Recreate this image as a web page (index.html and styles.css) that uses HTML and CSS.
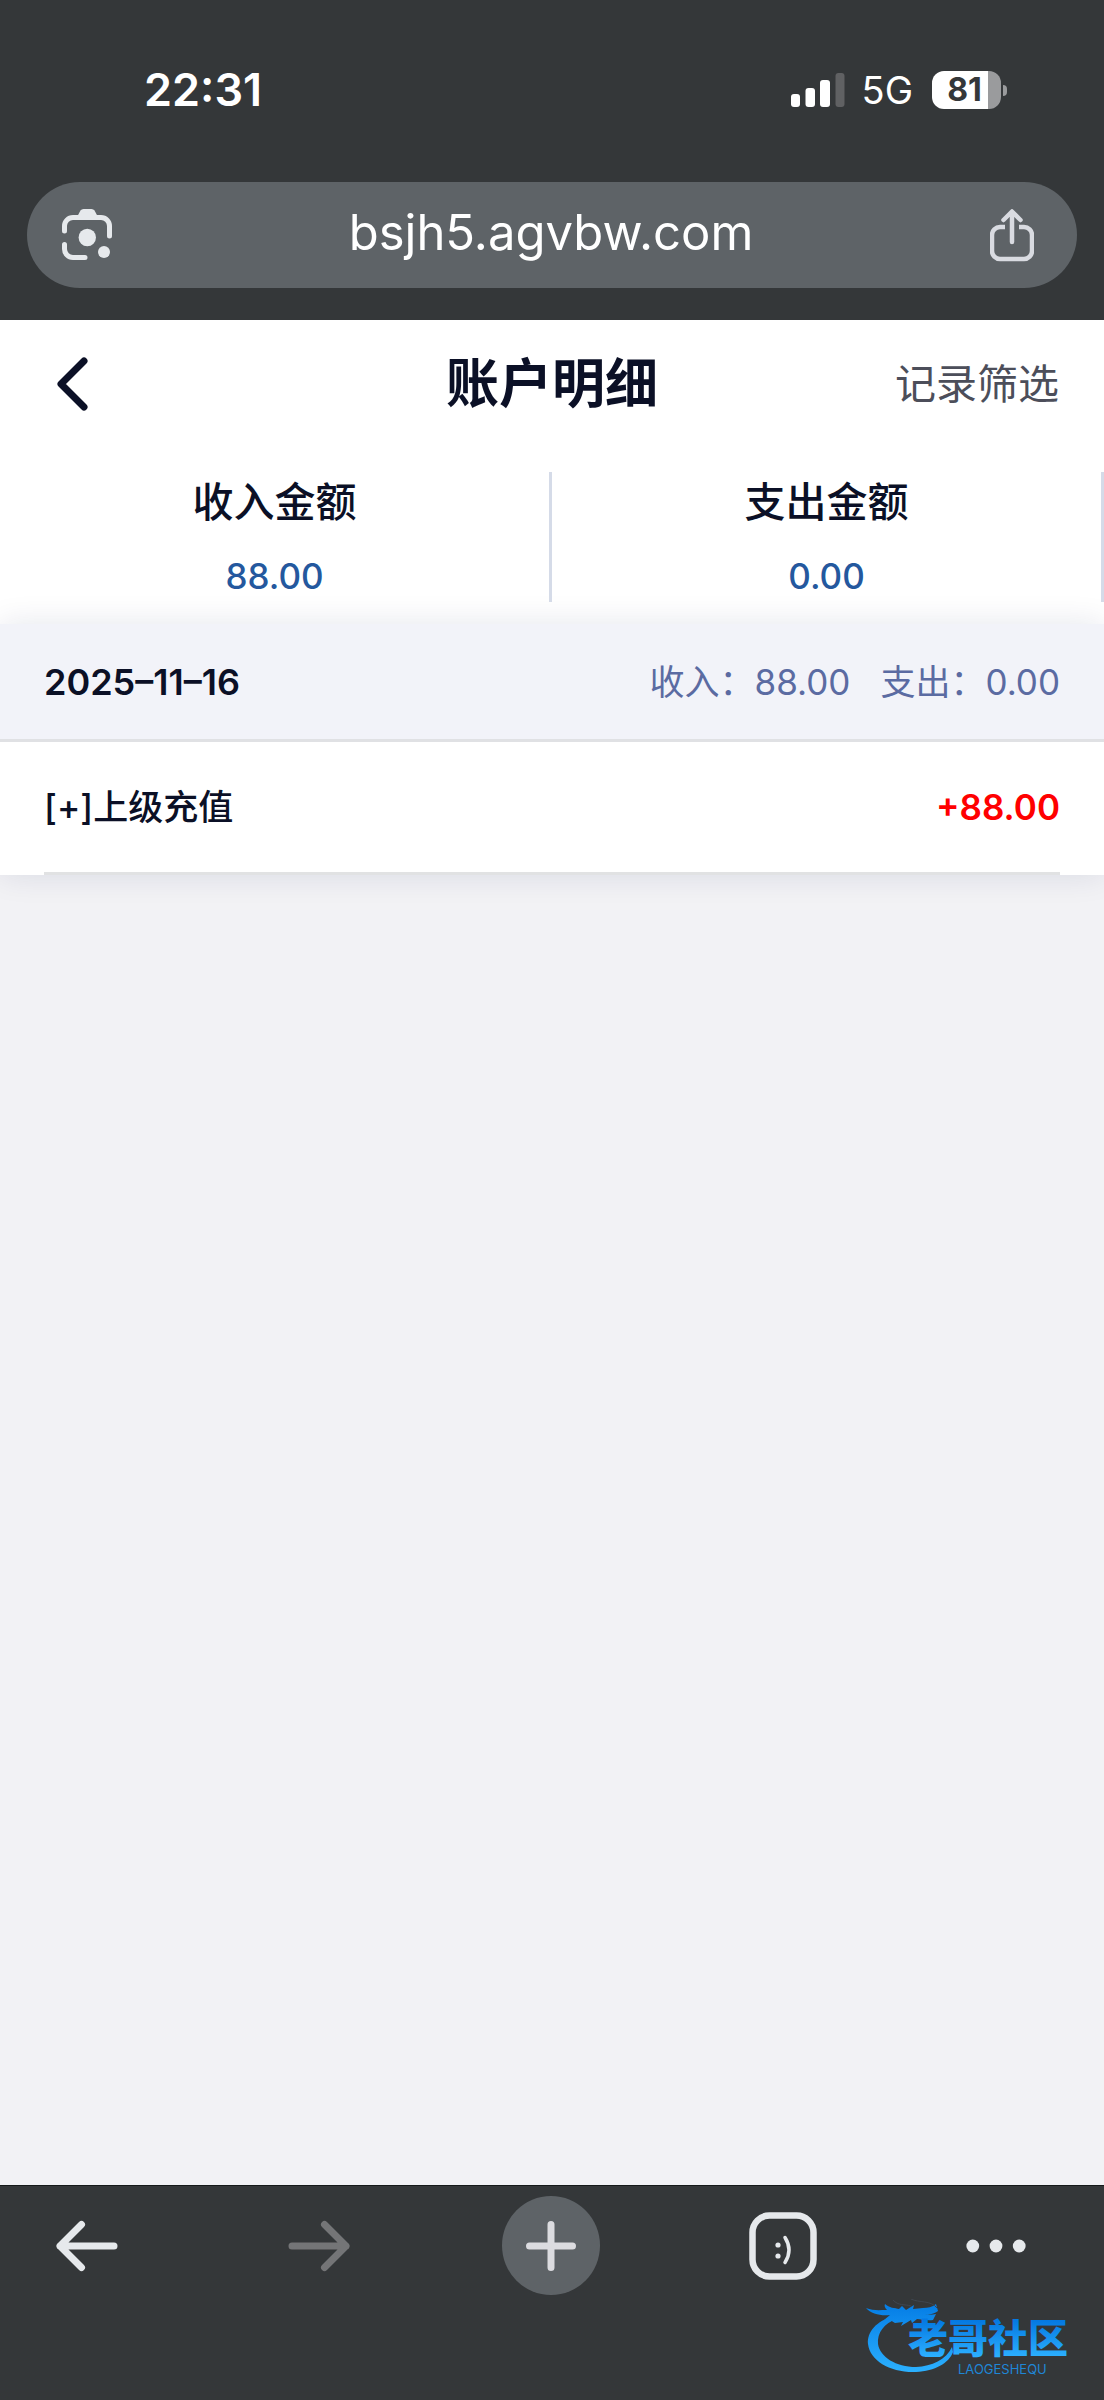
FILE: index.html
```html
<!DOCTYPE html>
<html lang="zh-CN">
<head>
<meta charset="utf-8">
<meta name="viewport" content="width=device-width, initial-scale=1">
<title>账户明细</title>
<link rel="stylesheet" href="styles.css">
</head>
<body>
<header class="browser-top">
  <div class="status">
    <time class="clock">22:31</time>
    <div class="status-right">
      <svg class="signal" width="54" height="34" viewBox="0 0 54 34" fill="#fff" aria-hidden="true">
        <rect x="0" y="21" width="9" height="13" rx="3"/>
        <rect x="14.5" y="15" width="9.5" height="19" rx="3"/>
        <rect x="29" y="7" width="10" height="27" rx="3"/>
        <rect x="44.500" y="0" width="9" height="34" rx="3" fill="#606163"/>
      </svg>
      <span class="network">5G</span>
      <div class="battery"><span class="battery-level">81</span></div>
    </div>
  </div>
  <form class="address">
    <button class="icon-button" type="button" aria-label="智能镜头">
      <svg width="50" height="52" viewBox="0 0 50 52" fill="none" stroke="#e6e9ec" stroke-width="5" stroke-linecap="round" aria-hidden="true">
        <path d="M2.500 22V17a8.500 8.500 0 0 1 8.500-8.500H39a8.500 8.500 0 0 1 8.500 8.500V27"/>
        <path d="M2.500 35.500V40a8.500 8.500 0 0 0 8.500 8.500H23"/>
        <path d="M15 8 18.500 1.500Q19.500 0 21.500 0h8Q31.500 0 32.500 1.500L36 8Z" fill="#e6e9ec" stroke="none"/>
        <circle cx="25.300" cy="28.500" r="8.700" fill="#e6e9ec" stroke="none"/>
        <circle cx="42" cy="43" r="6" fill="#e6e9ec" stroke="none"/>
      </svg>
    </button>
    <input class="url" type="text" value="bsjh5.agvbw.com" aria-label="网址">
    <button class="icon-button" type="button" aria-label="分享">
      <svg width="44" height="54" viewBox="0 0 44 54" fill="none" stroke="#d9dbe1" stroke-width="4.500" stroke-linecap="round" stroke-linejoin="round" aria-hidden="true">
        <path d="M15 19h-5a8 8 0 0 0-8 8v16a8 8 0 0 0 8 8h24a8 8 0 0 0 8-8V27a8 8 0 0 0-8-8h-5" stroke-linecap="butt"/>
        <path d="M22 34V4M13.500 12 22 3.500 30.500 12"/>
      </svg>
    </button>
  </form>
</header>

<main class="page">
  <div class="title-bar">
    <button class="back" type="button" aria-label="返回">
      <svg width="31" height="54" viewBox="0 0 31 54" fill="none" stroke="#0b1026" stroke-width="7" stroke-linecap="round" stroke-linejoin="round" aria-hidden="true"><path d="M27 4 4 27 27 50"/></svg>
    </button>
    <h1 class="title">账户明细</h1>
    <a class="filter" href="#filter">记录筛选</a>
  </div>

  <dl class="totals">
    <div class="total"><dt>收入金额</dt><dd>88.00</dd></div>
    <div class="total"><dt>支出金额</dt><dd>0.00</dd></div>
  </dl>

  <section class="day">
    <div class="day-head">
      <h2 class="date">2025–11–16</h2>
      <p class="day-sums"><span>收入：88.00</span><span>支出：0.00</span></p>
    </div>
    <ul class="records">
      <li class="record"><span>[+]上级充值</span><span class="amount">+88.00</span></li>
    </ul>
  </section>
</main>

<nav class="browser-nav">
  <button class="nav-button" type="button" aria-label="后退">
    <svg width="62" height="52" viewBox="0 0 62 52" fill="none" stroke="#e6e9ec" stroke-width="7" stroke-linecap="round" stroke-linejoin="round" aria-hidden="true"><path d="M58 26H4M25.500 4.500 4 26l21.500 21.500"/></svg>
  </button>
  <button class="nav-button" type="button" aria-label="前进">
    <svg width="62" height="52" viewBox="0 0 62 52" fill="none" stroke="#747577" stroke-width="7" stroke-linecap="round" stroke-linejoin="round" aria-hidden="true"><path d="M4 26h54M36.500 4.500 58 26 36.500 47.500"/></svg>
  </button>
  <button class="nav-button nav-new" type="button" aria-label="新标签页">
    <svg width="50" height="50" viewBox="0 0 50 50" fill="none" stroke="#dcdce0" stroke-width="7" stroke-linecap="round" aria-hidden="true"><path d="M25 3.500v43M3.500 25h43"/></svg>
  </button>
  <button class="nav-button" type="button" aria-label="标签页">
    <svg width="68" height="68" viewBox="0 0 68 68" fill="none" stroke="#e6e9ec" aria-hidden="true">
      <rect x="3.500" y="3.500" width="61" height="61" rx="17" stroke-width="6.500"/>
      <circle cx="29" cy="33" r="2.600" fill="#e6e9ec" stroke="none"/><circle cx="29" cy="44" r="2.600" fill="#e6e9ec" stroke="none"/>
      <path d="M36 25.500q8 12.500 0 25" stroke-width="3.500" stroke-linecap="round"/>
    </svg>
  </button>
  <button class="nav-button nav-more" type="button" aria-label="更多">
    <svg width="62" height="14" viewBox="0 0 62 14" fill="#e6e9ec" aria-hidden="true"><circle cx="7" cy="7" r="6.600"/><circle cx="31" cy="7" r="6.600"/><circle cx="55" cy="7" r="6.600"/></svg>
  </button>

  <svg class="watermark" width="222" height="84" viewBox="0 0 222 84" role="img" aria-label="老哥社区">
    <defs>
      <linearGradient id="ring" gradientUnits="userSpaceOnUse" x1="0" y1="8" x2="0" y2="74"><stop offset="0" stop-color="#067fe6"/><stop offset="1" stop-color="#2cb1ff"/></linearGradient>
      <linearGradient id="word" gradientUnits="userSpaceOnUse" x1="0" y1="22" x2="0" y2="58"><stop offset="0" stop-color="#0579e2"/><stop offset="1" stop-color="#2cb0ff"/></linearGradient>
    </defs>
    <g fill="url(#ring)">
      <path d="M28 17C10 22 1 33 2 45c2 17 23 29 48 28 19-1 33-9 37-20l-1-5c-6 13-20 19-36 20C30 68 14 58 12 45 11 34 18 24 31 20Z"/>
      <path d="M0 9c7 3 14 2 21 2-2-2-3-4-2-6 4 4 10 4 14 5l3-3 4 4 8-5-1 4 10-1c5 0 9-1 13-4l2 7c-4 3-9 4-14 3 4 1 8 1 12 0l-3 6c-6 1-12-1-16-1l-5 4-1-3-10 6 2-4-8 1c-4-3-6-4-11-3 2-2 4-3 6-5C15 17 5 15 0 9Z"/>
    </g>
    <path d="M27 1c5 6 12 4 18 6M45 0c8 4 20 1 26 9" fill="none" stroke="#3f4650" stroke-width="1"/>
    <text class="mark-name" x="42" y="54">老哥社区</text>
    <text class="mark-latin" x="92" y="75">LAOGESHEQU</text>
  </svg>
</nav>
</body>
</html>
```

FILE: styles.css
```css
* {
  box-sizing: border-box;
}

body {
  margin: 0;
  min-height: 100vh;
  display: flex;
  flex-direction: column;
  background: #f2f2f5;
  color: #0b1026;
  font-family: Inter, "Noto Sans CJK SC", sans-serif;
  font-size: 35px;
  line-height: 48px;
}

h1, h2, p, dl, dd, ul {
  margin: 0;
  padding: 0;
}

button {
  display: flex;
  align-items: center;
  justify-content: center;
  padding: 0;
  border: 0;
  background: none;
}

svg {
  display: block;
}

/* browser chrome, top */
.browser-top {
  padding: 60px 27px 32px;
  background: #343739;
  color: #fff;
}

.status {
  display: flex;
  align-items: center;
  justify-content: space-between;
  height: 60px;
  margin-bottom: 62px;
  padding: 0 69px 0 117px;
}

.clock {
  font-size: 45px;
  font-weight: 600;
}

.status-right {
  display: flex;
  align-items: center;
}

.network {
  margin: 0 19px 0 17px;
  font-size: 38px;
}

.battery {
  position: relative;
  width: 69px;
  height: 38px;
  margin-right: 7px;
  border-radius: 12px;
  background: linear-gradient(90deg, #fff 56px, #9a9b9d 56px);
  color: #343739;
  text-align: center;
}

.battery::after {
  content: "";
  position: absolute;
  top: 14px;
  right: -6px;
  width: 4px;
  height: 11px;
  border-radius: 0 4px 4px 0;
  background: #9a9b9d;
}

.battery-level {
  display: block;
  padding-right: 4px;
  font-size: 32px;
  font-weight: 700;
  line-height: 38px;
}

.address {
  display: flex;
  align-items: center;
  gap: 24px;
  height: 106px;
  padding: 0 43px 0 35px;
  border-radius: 53px;
  background: #5e6367;
}

.icon-button {
  flex: none;
}

.url {
  flex: 1;
  min-width: 0;
  padding: 0 0 4px;
  border: 0;
  outline: 0;
  background: none;
  color: #fff;
  font: 400 49px/64px Inter, sans-serif;
  text-align: center;
}

/* account page */
.page {
  flex: 1;
}

.title-bar {
  display: grid;
  grid-template-columns: 1fr auto 1fr;
  align-items: center;
  height: 128px;
  padding: 0 45px;
  background: #fff;
}

.back {
  justify-self: start;
  padding-left: 12px;
}

.title {
  font-size: 53px;
  font-weight: 700;
  line-height: 64px;
}

.filter {
  justify-self: end;
  color: #4c4e5a;
  font-size: 41px;
  text-decoration: none;
}

.totals {
  display: grid;
  grid-template-columns: 1fr 1fr;
  padding: 24px 0 22px;
  background: #fff;
}

.total {
  display: flex;
  flex-direction: column;
  gap: 26px;
  height: 130px;
  padding-top: 6px;
  border-right: 3px solid #d5dbe8;
  text-align: center;
}

.total dt {
  font-size: 41px;
  font-weight: 500;
}

.total dd {
  color: #24589e;
  font-weight: 500;
}

.day {
  box-shadow: 0 0 30px rgba(20, 25, 80, 0.11);
}

.day-head {
  display: flex;
  align-items: center;
  justify-content: space-between;
  height: 118px;
  padding: 0 44px;
  border-bottom: 3px solid #e0e1e4;
  background: #f2f3f9;
}

.date {
  font-size: 36px;
  font-weight: 600;
}

.day-sums {
  display: flex;
  gap: 30px;
  color: #5b6ba2;
}

.records {
  padding: 0 44px;
  background: #fff;
  list-style: none;
}

.record {
  display: flex;
  align-items: center;
  justify-content: space-between;
  height: 133px;
  border-bottom: 3px solid #e1e2e3;
  font-weight: 500;
}

.amount {
  color: #f00;
  font-weight: 600;
}

/* browser chrome, bottom */
.browser-nav {
  position: sticky;
  bottom: 0;
  display: flex;
  align-items: flex-start;
  justify-content: space-between;
  height: 215px;
  padding: 10px 78px 0 38px;
  border-top: 1px solid #15191a;
  background: #343739;
}

.nav-button {
  width: 98px;
  height: 99px;
}

.nav-new {
  border-radius: 50%;
  background: #5e6367;
}

.nav-more {
  width: 60px;
}

.watermark {
  position: absolute;
  right: 16px;
  bottom: 17px;
}

.mark-name {
  fill: url(#word);
  font-family: "Noto Sans CJK SC", sans-serif;
  font-size: 40px;
  font-weight: 900;
}

.mark-latin {
  fill: #1f86d6;
  font-size: 13px;
}
```
